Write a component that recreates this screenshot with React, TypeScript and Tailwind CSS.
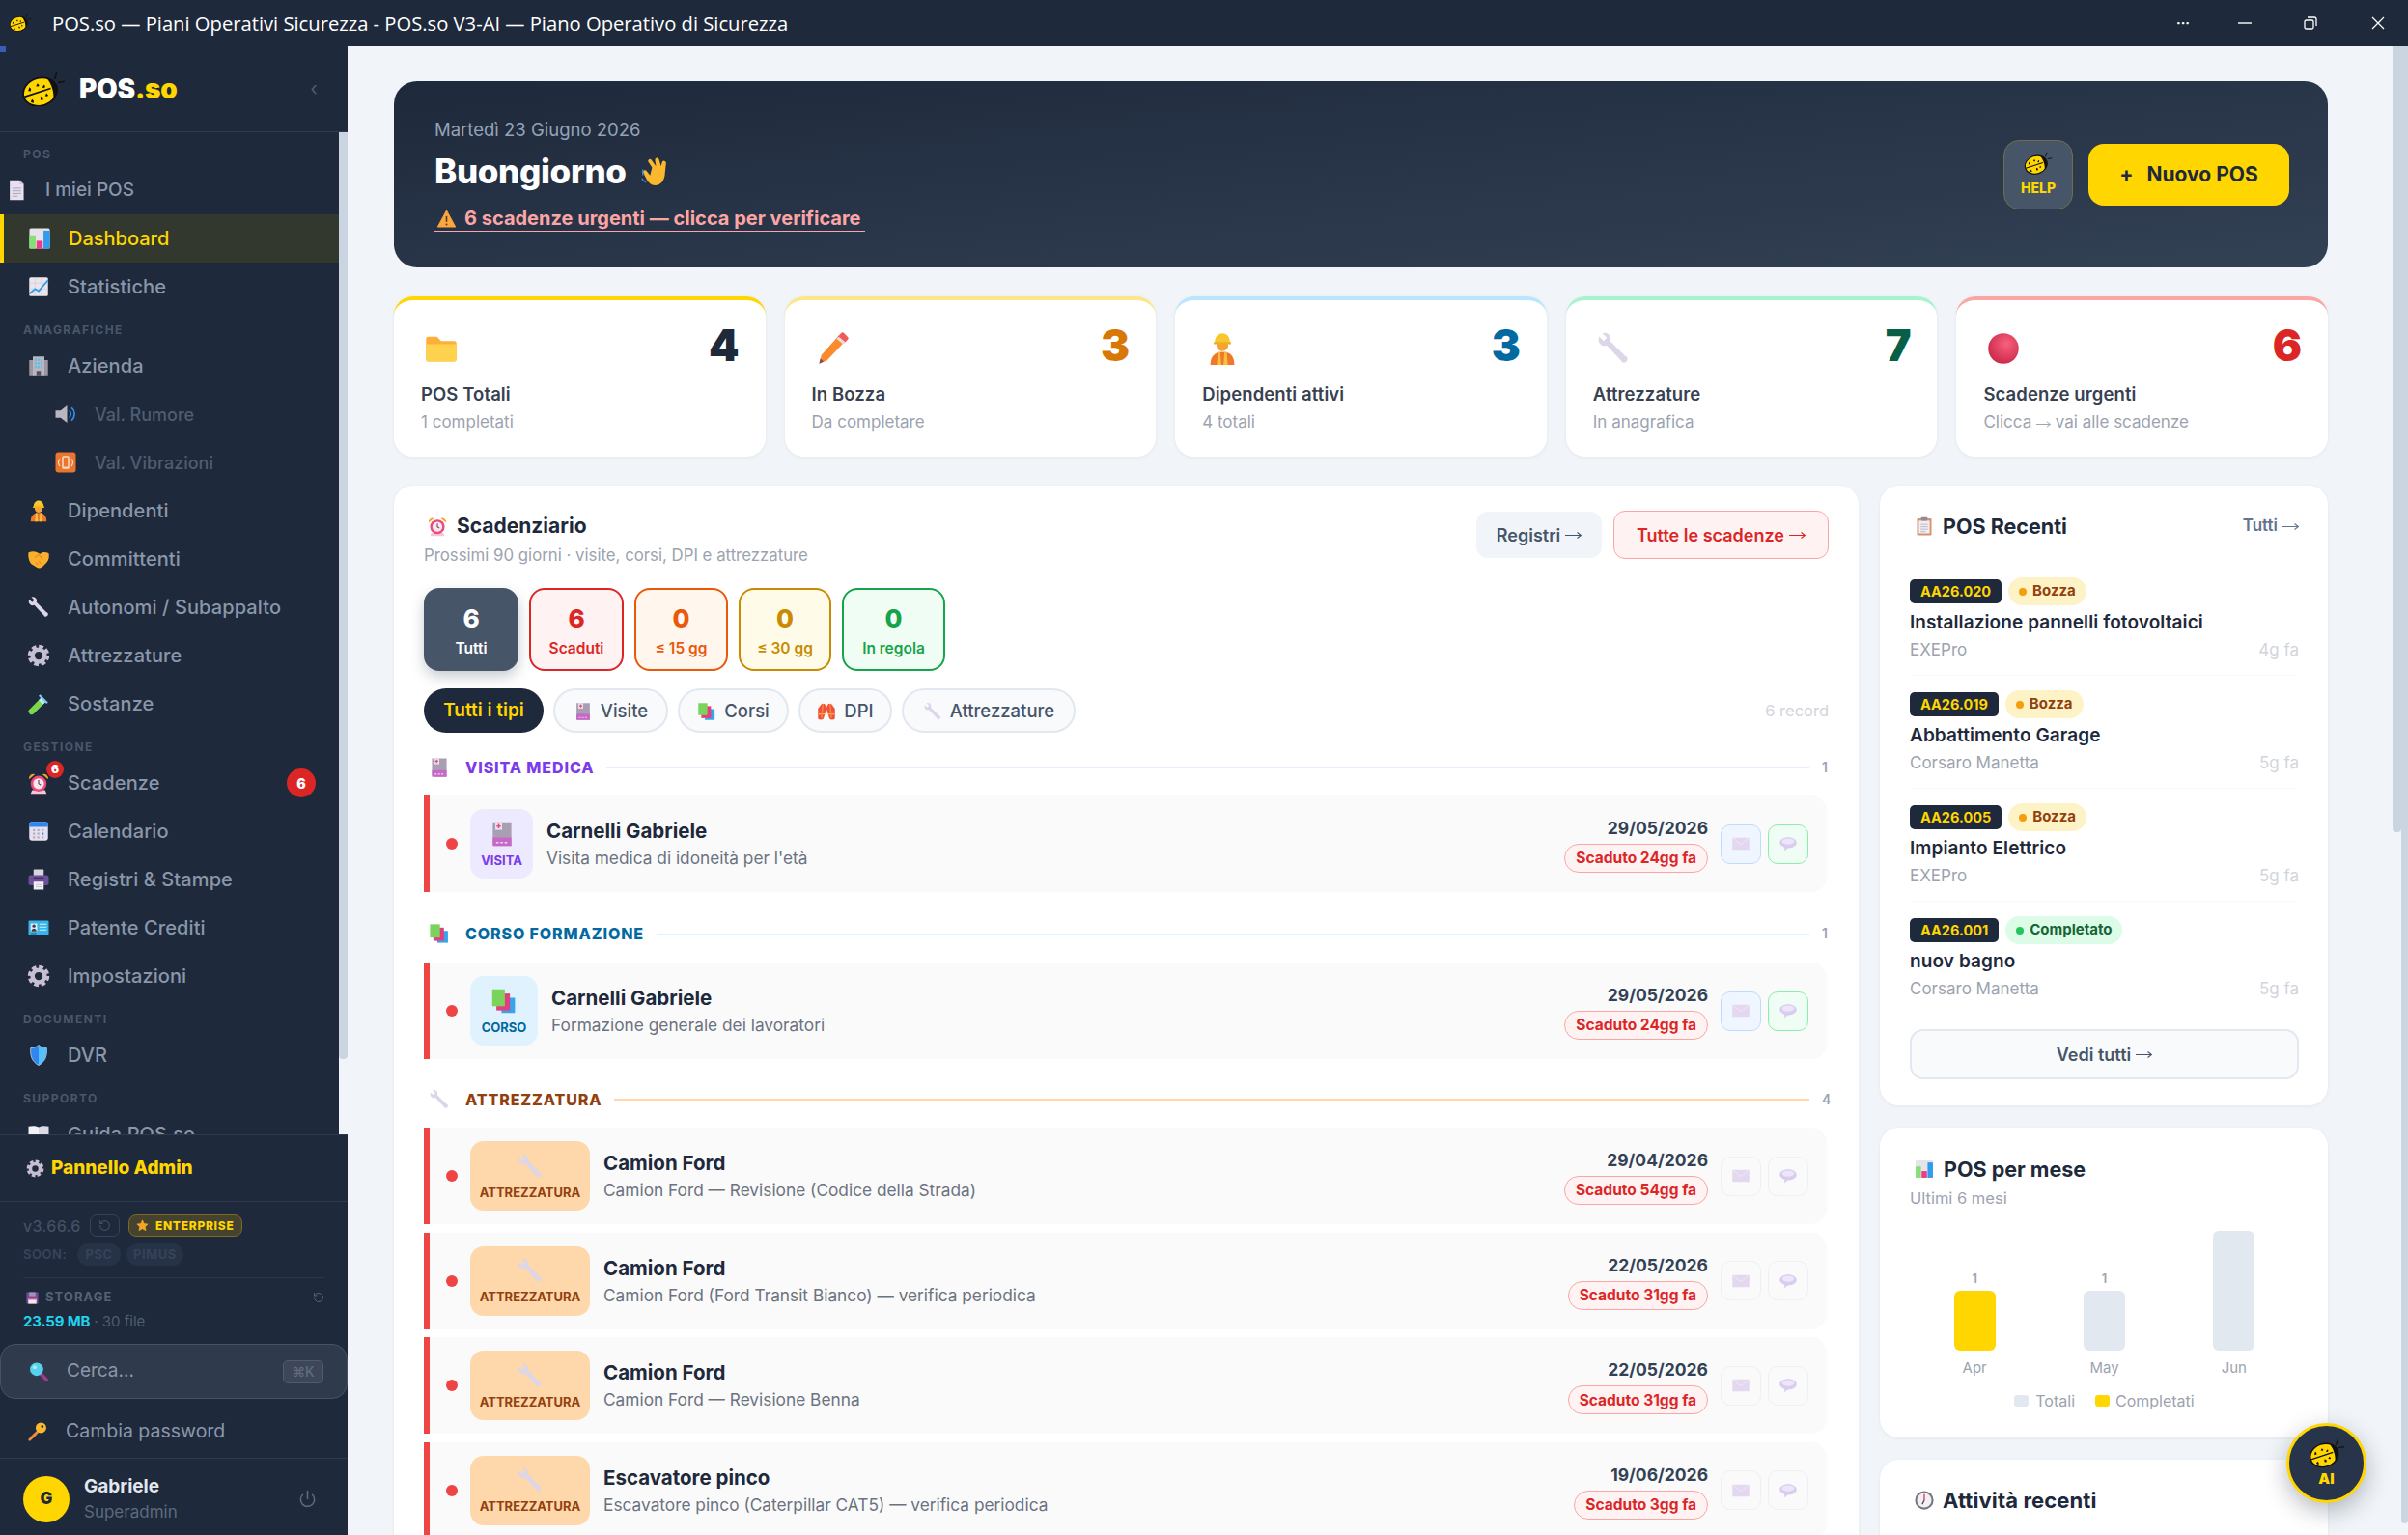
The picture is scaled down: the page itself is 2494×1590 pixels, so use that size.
import React from 'react';
import { Power, RotateCcw } from 'lucide-react';

const paths: Record<string, React.ReactNode> = {
  doc: (<><path d="M6 1h15l6 6v24H6z" fill="#e7e0f0" /><path d="M21 1l6 6h-6z" fill="#c9c0da" /><path d="M10 13h13M10 17h13M10 21h13M10 25h8" stroke="#a9a2b8" strokeWidth="1.4" /></>),
  bars: (<><rect x="3" y="3" width="26" height="26" rx="2" fill="#e6e3ea" /><rect x="3" y="12" width="8" height="17" fill="#86e07a" /><rect x="12" y="19" width="8" height="10" fill="#ee3b85" /><rect x="21" y="6" width="8" height="23" fill="#2f9cf0" /></>),
  line: (<><rect x="3" y="3" width="26" height="26" rx="2" fill="#e9e6ec" /><path d="M3 11h26M3 19h26M11 3v26M20 3v26" stroke="#d3cfd9" strokeWidth="1" /><path d="M3 26l8-7 5 3 13-15" fill="none" stroke="#2f9cf0" strokeWidth="2.4" /></>),
  building: (<><rect x="3" y="8" width="6" height="21" fill="#9a97a3" /><rect x="23" y="8" width="6" height="21" fill="#9a97a3" /><rect x="8" y="3" width="16" height="26" fill="#b9b6c2" /><path d="M11 6h2v3h-2zM15 6h2v3h-2zM19 6h2v3h-2zM11 11h2v3h-2zM15 11h2v3h-2zM19 11h2v3h-2zM11 16h2v3h-2zM15 16h2v3h-2zM19 16h2v3h-2z" fill="#3cc4f2" /><rect x="13" y="23" width="6" height="6" fill="#56505f" /></>),
  speaker: (<><path d="M2 11h7l9-7v24l-9-7H2z" fill="#b9b6c2" /><path d="M21 11a7 7 0 0 1 0 10M24 7a12 12 0 0 1 0 18" fill="none" stroke="#2f8df0" strokeWidth="2.2" /></>),
  vibrate: (<><rect x="2" y="2" width="28" height="28" rx="4" fill="#e9752e" /><rect x="11" y="7" width="10" height="18" rx="2" fill="#f7dcc6" /><rect x="13" y="9" width="6" height="13" fill="#e9752e" /><path d="M8 11a8 8 0 0 0 0 10M24 11a8 8 0 0 1 0 10" fill="none" stroke="#f7dcc6" strokeWidth="1.6" /></>),
  worker: (<><path d="M5 31c0-8 4-12 11-12s11 4 11 12z" fill="#f0782c" /><path d="M12 19h2l1 12h-4zM18 19h2l1 12h-4z" fill="#f8c13c" /><circle cx="16" cy="13" r="5.500" fill="#f7a13a" /><path d="M9 11c0-6 3-9 7-9s7 3 7 9z" fill="#fbc52d" /><rect x="8" y="10" width="16" height="2" fill="#eeb020" /></>),
  hands: (<><path d="M2 7c5-2 8-2 12 0l4 2 3-2c3-1 6 0 9 1 1 5 0 10-3 13l-6 6c-3 2-5 2-7 1l-8-5C3 20 1 13 2 7z" fill="#fbb02d" /><path d="M11 14l5-4 6 6M15 24l-3-3M19 22l-3-3" fill="none" stroke="#e88a18" strokeWidth="1.5" /></>),
  wrench: (<path d="M6 2c3-1 6 0 7 3 1 2 0 3 0 4l14 14c2 0 3 3 1 5s-4 1-5-1L10 13c-2 1-4 1-6-1-2-2-2-5-1-7l4 4 3-3z" fill="#dcd6e8" />),
  gear: (<><circle cx="16" cy="16" r="12.5" fill="none" stroke="#c6bfd2" strokeWidth="5" strokeDasharray="6.2 3.6" /><circle cx="16" cy="16" r="8.5" fill="none" stroke="#c6bfd2" strokeWidth="6" /></>),
  tube: (<><path d="M3 24L19 8l6 6L9 30c-2 2-5 1-6-1s-2-3 0-5z" fill="#7ad84a" /><path d="M16 11l4-4 6 6-4 4z" fill="#bfeaf8" /><path d="M17 4l11 11" stroke="#7ec8ee" strokeWidth="3" /></>),
  alarm: (<><path d="M3 11a6 6 0 0 1 8-7zM29 11a6 6 0 0 0-8-7z" fill="#f5a524" /><path d="M7 26l-2 5h22l-2-5z" fill="#f4c6d8" /><circle cx="16" cy="17" r="11" fill="#ea4a7c" /><circle cx="16" cy="17" r="7.5" fill="#f8e8ee" /><path d="M16 12v5l3 2" fill="none" stroke="#6b4a5e" strokeWidth="1.6" /></>),
  calendar: (<><rect x="3" y="3" width="26" height="26" rx="4" fill="#e6e1ee" /><path d="M3 10V7a4 4 0 0 1 4-4h18a4 4 0 0 1 4 4v3z" fill="#2f86ee" /><path d="M8 13h3v3H8zM14 13h3v3h-3zM20 13h3v3h-3zM8 18h3v3H8zM14 18h3v3h-3zM8 23h3v3H8zM14 23h3v3h-3zM20 23h3v3h-3z" fill="#b3adc0" /><rect x="20" y="18" width="3" height="3" fill="#2f8df0" /></>),
  printer: (<><rect x="9" y="2" width="14" height="10" rx="1" fill="#d9d4e2" /><rect x="2" y="10" width="28" height="14" rx="3" fill="#6c4f96" /><rect x="9" y="13" width="14" height="3" fill="#3f2f5c" /><rect x="9" y="19" width="14" height="11" fill="#f2f0f5" /><path d="M12 23h8M12 26h8" stroke="#b8b3c2" /></>),
  card: (<><rect x="2" y="6" width="28" height="20" rx="1.5" fill="#37b4ea" /><rect x="5" y="10" width="9" height="11" fill="#d9f0fa" /><circle cx="9.5" cy="13.5" r="2.2" fill="#4a3a3a" /><path d="M6 21c0-3 2-4 3.5-4s3.500 1 3.500 4z" fill="#4a3a3a" /><path d="M17 11h10M17 15h10M17 19h10" stroke="#d9f0fa" strokeWidth="1.5" /><path d="M5 24h8" stroke="#114a6c" strokeWidth="1" /></>),
  shield: (<><path d="M16 2c3 3 7 4 11 4 1 11-2 19-11 24C7 25 4 17 5 6c4 0 8-1 11-4z" fill="#2f86ee" stroke="#b9c7da" strokeWidth="1.2" /><path d="M16 2c3 3 7 4 11 4 1 11-2 19-11 24z" fill="#57c0fa" /></>),
  book: (<><path d="M2 5c5-1 10-1 14 1v24c-4-2-9-2-14-1z" fill="#f2f1f6" /><path d="M30 5c-5-1-10-1-14 1v24c4-2 9-2 14-1z" fill="#dcdae6" /></>),
  star: (<path d="M16 2l4.300 9 9.700 1.300-7 6.800 1.700 9.700-8.700-4.700-8.700 4.700 1.700-9.700-7-6.800 9.700-1.300z" fill="#f5a623" stroke="#f5a623" strokeWidth="1.5" strokeLinejoin="round" />),
  floppy: (<><rect x="3" y="3" width="26" height="26" rx="2" fill="#6c4f96" /><rect x="9" y="3" width="14" height="9" fill="#a18fbd" /><rect x="7" y="16" width="18" height="13" fill="#f2e6f0" /><rect x="7" y="16" width="18" height="4" fill="#ea4a7c" /></>),
  lens: (<><path d="M19 19l9 9" stroke="#a23a8e" strokeWidth="5" strokeLinecap="round" /><circle cx="13" cy="12" r="10" fill="#57d2ee" /><circle cx="10" cy="9" r="3" fill="#a8ecf8" /></>),
  key: (<><path d="M4 28l13-13" stroke="#f08a3c" strokeWidth="4" strokeLinecap="round" /><path d="M7 22l3 3M10 19l3 3" stroke="#f08a3c" strokeWidth="2.5" /><circle cx="21" cy="10" r="8" fill="#fbb92d" /><circle cx="23" cy="8" r="2" fill="#1e293b" /></>),
  wave: (<><path d="M12 12L8 6a2 2 0 0 1 3-2l5 7-1-6a2 2 0 0 1 4-1l2 7 1-4a2 2 0 0 1 4 1l-1 9c0 8-4 13-10 13-4 0-7-3-9-7l-3-6a2 2 0 0 1 3-2l4 5z" fill="#fbb82e" /><path d="M3 20c-1-2-1-4 0-6M6 27c-2-1-4-2-4-4" fill="none" stroke="#2f86ee" strokeWidth="1.4" /></>),
  warn: (<><path d="M16 3l14 26H2z" fill="#f9a73e" stroke="#f9a73e" strokeWidth="1.5" strokeLinejoin="round" /><path d="M16 12v9" stroke="#5a3a1e" strokeWidth="2.4" /><circle cx="16" cy="25" r="1.500" fill="#5a3a1e" /></>),
  folder: (<><path d="M2 7a2 2 0 0 1 2-2h8l4 4h12a2 2 0 0 1 2 2v15a2 2 0 0 1-2 2H4a2 2 0 0 1-2-2z" fill="#fbb03b" /><path d="M2 12h28v14a2 2 0 0 1-2 2H4a2 2 0 0 1-2-2z" fill="#ffd24d" /></>),
  pencil: (<><path d="M6 22L22 4l6 5L11 27l-7 3z" fill="#f98a2e" /><path d="M21 5l3-3a2 2 0 0 1 3 0l3 3a2 2 0 0 1 0 3l-3 3z" fill="#f25a5a" /><path d="M20 7l2-2 6 5-2 2z" fill="#eedada" /><path d="M4 30l1-5 3 3z" fill="#7a4a68" /></>),
  redball: (<><defs><radialGradient id="rb" cx="0.6" cy="0.35" r="0.8"><stop offset="0" stopColor="#f8607e" /><stop offset="1" stopColor="#c4203f" /></radialGradient></defs><circle cx="16" cy="16" r="14" fill="url(#rb)" /></>),
  medbook: (<><path d="M5 2h22v28H8a3 3 0 0 1-3-3z" fill="#a99fb2" /><rect x="8" y="2" width="8" height="9" fill="#e9e2ee" /><path d="M12 4v5M9.500 6.500h5" stroke="#ea4a7c" strokeWidth="1.800" /><rect x="5" y="20" width="22" height="10" fill="#c668c8" /><path d="M9 26h3M14 26h3M19 26h3" stroke="#f4d7f2" strokeWidth="1.500" /></>),
  books: (<><rect x="13" y="12" width="16" height="18" fill="#3aa4ea" /><rect x="7" y="7" width="16" height="20" fill="#e0417e" /><rect x="2" y="2" width="15" height="20" fill="#7ad45c" /></>),
  vest: (<><path d="M8 3h5l3 6 3-6h5l6 8v17c-3 2-6 2-9 0l-5-16-5 16c-3 2-6 2-9 0V11z" fill="#f0503c" /><path d="M3 20h10M19 20h10" stroke="#f8c13c" strokeWidth="2" /><path d="M10 3l-2 24M22 3l2 24" stroke="#f8843c" strokeWidth="2.500" /></>),
  mail: (<><rect x="2" y="6" width="28" height="20" fill="#e3d8ef" /><path d="M2 6l14 11L30 6" fill="none" stroke="#f0e9f6" strokeWidth="1.500" /></>),
  bubble: (<><path d="M16 5c8 0 14 4 14 9s-6 9-14 9l-1 0-5 5 0-6C5 20 2 17 2 14c0-5 6-9 14-9z" fill="#d9ccf0" /><ellipse cx="16" cy="12" rx="10" ry="5" fill="#ede6f8" /></>),
  clipboard: (<><rect x="4" y="3" width="24" height="28" rx="2" fill="#d8916a" /><rect x="7" y="7" width="18" height="21" fill="#f0eef4" /><path d="M10 13h12M10 17h12M10 21h12M10 25h8" stroke="#b0abbd" strokeWidth="1.300" /><rect x="11" y="1" width="10" height="6" rx="1" fill="#8e8a98" /></>),
  clock: (<><circle cx="16" cy="16" r="14" fill="#7a7680" /><circle cx="16" cy="16" r="11" fill="#f2f0f4" /><path d="M16 16V7" stroke="#ea3a6c" strokeWidth="2" /><path d="M16 16l-3 6" stroke="#514c58" strokeWidth="2" /></>),
};

function Emoji({ name, size = 24, className = '' }: { name: string; size?: number; className?: string }) {
  return (
    <svg width={size} height={size} viewBox="0 0 32 32" className={`shrink-0 ${className}`}>
      {paths[name]}
    </svg>
  );
}

function Ladybug({ w = 40, className = '' }: { w?: number; className?: string }) {
  return (
    <svg width={w} height={w * 0.8} viewBox="0 0 40 32" className={`shrink-0 ${className}`}>
      <path d="M30 7l2-6M33 10l6-1" stroke="#111" strokeWidth="1.300" />
      <g transform="rotate(-18 18 18)">
        <ellipse cx="17" cy="18" rx="15.500" ry="12.500" fill="#ffd600" stroke="#111" strokeWidth="1.500" />
        <path d="M26 7.500a15 12.500 0 0 1 0 21c3-6 3-15 0-21z" fill="#111" />
        <path d="M2 18h25" stroke="#111" strokeWidth="1.400" />
        <path d="M9 11l1 2-1 2-2-1zM17 10l1 2-1 1-2-1zM22 13l1 1-1 2-2-1zM8 22l1 2-1 2-2-2zM16 22l2 2-1 2-2-1zM22 21l1 2-1 1-2-1z" fill="#111" />
      </g>
    </svg>
  );
}

function Arrow({ w = 17 }: { w?: number }) {
  return (
    <svg width={w} height="9" viewBox="0 0 17 9" fill="none" stroke="currentColor" strokeWidth="1.100" className="inline-block shrink-0 align-[-1px]">
      <path d="M0 4.500h16M12.500 1.500l4 3-4 3" />
    </svg>
  );
}

type NavItem = { label?: string; section?: string; icon?: string; kind?: 'top' | 'sub' | 'active' };

const nav: NavItem[] = [
  { section: 'POS' },
  { label: 'I miei POS', icon: 'doc', kind: 'top' },
  { label: 'Dashboard', icon: 'bars', kind: 'active' },
  { label: 'Statistiche', icon: 'line' },
  { section: 'ANAGRAFICHE' },
  { label: 'Azienda', icon: 'building' },
  { label: 'Val. Rumore', icon: 'speaker', kind: 'sub' },
  { label: 'Val. Vibrazioni', icon: 'vibrate', kind: 'sub' },
  { label: 'Dipendenti', icon: 'worker' },
  { label: 'Committenti', icon: 'hands' },
  { label: 'Autonomi / Subappalto', icon: 'wrench' },
  { label: 'Attrezzature', icon: 'gear' },
  { label: 'Sostanze', icon: 'tube' },
  { section: 'GESTIONE' },
  { label: 'Scadenze', icon: 'alarm' },
  { label: 'Calendario', icon: 'calendar' },
  { label: 'Registri & Stampe', icon: 'printer' },
  { label: 'Patente Crediti', icon: 'card' },
  { label: 'Impostazioni', icon: 'gear' },
  { section: 'DOCUMENTI' },
  { label: 'DVR', icon: 'shield' },
  { section: 'SUPPORTO' },
  { label: 'Guida POS.so', icon: 'book' },
];

function SideRow({ item }: { item: NavItem }) {
  if (item.section) {
    return (
      <div className="flex h-8 shrink-0 items-end pb-[3px] pl-6 text-[12px] font-bold tracking-[0.12em] text-[#4a576b]">
        {item.section}
      </div>
    );
  }
  if (item.kind === 'top') {
    return (
      <div className="flex h-[50px] shrink-0 items-center gap-[19px] pl-[6px] text-[19px] font-medium text-[#8a97aa]">
        <Emoji name={item.icon!} size={22} />
        {item.label}
      </div>
    );
  }
  if (item.kind === 'sub') {
    return (
      <div className="flex h-[50px] shrink-0 items-center gap-[18px] pl-[56px] text-[18px] font-medium text-[#4f5d72]">
        <Emoji name={item.icon!} size={24} />
        {item.label}
      </div>
    );
  }
  if (item.kind === 'active') {
    return (
      <div className="flex h-[50px] shrink-0 items-center gap-[17px] border-l-4 border-[#ffd600] bg-[#33382f] pl-6 text-[20px] font-medium text-[#ffd600]">
        <Emoji name={item.icon!} size={26} />
        {item.label}
      </div>
    );
  }
  return (
    <div className="relative flex h-[50px] shrink-0 items-center gap-[18px] pl-7 text-[20px] font-medium tracking-[0.005em] text-[#8a97aa]">
      <Emoji name={item.icon!} size={24} />
      {item.label}
      {item.label === 'Scadenze' && (
        <>
          <span className="absolute left-[48px] top-[2px] flex h-[18px] w-[18px] items-center justify-center rounded-full bg-[#dc2626] text-[12px] font-black text-white">6</span>
          <span className="absolute left-[297px] top-[10px] flex h-[30px] w-[30px] items-center justify-center rounded-full bg-[#dc2626] text-[14px] font-black text-white">6</span>
        </>
      )}
    </div>
  );
}

function Sidebar() {
  return (
    <aside className="flex w-[360px] shrink-0 flex-col">
      <div className="flex h-[89px] shrink-0 items-center border-b border-[#2e3a4d] bg-[#1e293b] pl-[22px] pr-[31px]">
        <Ladybug w={46} />
        <span className="ml-[14px] text-[28px] font-black tracking-[-0.01em] text-white">POS<span className="text-[#ffd600]">.so</span></span>
        <span className="ml-auto text-[20px] text-[#4f5d72]">‹</span>
      </div>
      <div className="flex h-[1038px] shrink-0 bg-[#f1f5f9]">
        <nav className="flex w-[351px] shrink-0 flex-col overflow-hidden bg-[#1e293b] pt-[3px]">
          {nav.map((n, i) => <SideRow key={i} item={n} />)}
        </nav>
        <div className="h-[960px] w-[9px] rounded-b-[4px] bg-[#cbd5e1]" />
      </div>
      <div className="flex flex-1 flex-col border-t border-[#2e3a4d] bg-[#1e293b]">
        <div className="flex h-[69px] shrink-0 items-center gap-[7px] border-b border-[#2e3a4d] pl-[27px] text-[19px] font-extrabold text-[#ffd600]">
          <Emoji name="gear" size={19} />
          Pannello Admin
        </div>
        <div className="mx-6 flex h-[23px] mt-[13px] items-center gap-[9px]">
          <span className="text-[16px] font-medium tracking-[0.02em] text-[#435064]">v3.66.6</span>
          <span className="flex h-[23px] w-[31px] items-center justify-center rounded-[7px] border border-[#36435a] text-[#435064]">
            <RotateCcw size={13} />
          </span>
          <span className="flex h-[23px] w-[118px] items-center justify-center gap-[7px] rounded-[8px] border border-[#7a6c1e] bg-[#45432f] text-[12px] font-extrabold tracking-[0.06em] text-[#ffd600]">
            <Emoji name="star" size={13} />
            ENTERPRISE
          </span>
        </div>
        <div className="mx-6 mt-[7px] flex h-[23px] items-center text-[13px] font-bold tracking-[0.04em] text-[#36425a]">
          <span className="w-[56px]">SOON:</span>
          <span className="flex h-[23px] w-[45px] items-center justify-center rounded-full bg-[#263246]">PSC</span>
          <span className="ml-[6px] flex h-[23px] w-[59px] items-center justify-center rounded-full bg-[#263246]">PIMUS</span>
        </div>
        <div className="mx-6 mt-[12px] flex h-[33px] items-end justify-between border-t border-[#2a3649] text-[#566377]">
          <span className="flex h-[24px] items-center gap-[6px] pl-[2px] text-[13px] font-bold tracking-[0.08em]">
            <Emoji name="floppy" size={15} />
            STORAGE
          </span>
          <span className="flex h-[24px] items-center"><RotateCcw size={12} /></span>
        </div>
        <div className="mx-6 mt-[1px] flex h-[24px] items-center text-[15px] text-[#4f5d72]">
          <span className="font-bold tracking-[-0.01em] text-[#22d3ee]">23.59 MB</span>
          <span className="ml-[4px]">· 30 file</span>
        </div>
        <div className="mt-[11px] flex h-[57px] shrink-0 items-center rounded-[16px] border border-[#465266] bg-[#2f3a4c] pl-[28px] pr-[24px] text-[19px] text-[#8a97aa]">
          <Emoji name="lens" size={22} />
          <span className="ml-[18px]">Cerca...</span>
          <span className="ml-auto flex h-[24px] w-[42px] items-center justify-center rounded-[5px] border border-[#4f5b6e] bg-[#3d4759] text-[14px] font-medium text-[#5f6c82]">⌘K</span>
        </div>
        <div className="flex h-[61px] shrink-0 items-center gap-[18px] pl-[28px] pt-[6px] text-[19.500px] text-[#8a97aa]">
          <Emoji name="key" size={22} />
          Cambia password
        </div>
        <div className="flex flex-1 items-center border-t border-[#2e3a4d] pl-6 pr-[32px] pt-[4px]">
          <div className="flex h-12 w-12 shrink-0 items-center justify-center rounded-full bg-[#ffd600] text-[17px] font-black text-[#1e293b]">G</div>
          <div className="ml-[15px] flex flex-col">
            <span className="text-[19px] font-bold leading-[26px] text-[#e2e8f0]">Gabriele</span>
            <span className="text-[17px] leading-[26px] text-[#5b6a7f]">Superadmin</span>
          </div>
          <Power size={19} className="ml-auto text-[#5b6a7f]" />
        </div>
      </div>
    </aside>
  );
}

function StatCard({ icon, value, title, sub, top, color }: { icon: string; value: string; title: string; sub: React.ReactNode; top: string; color: string }) {
  return (
    <div className={`flex h-[166px] flex-col rounded-[20px] border-t-4 bg-white pl-7 pr-[27px] pt-[21px] shadow-[0_1px_4px_rgba(15,23,42,0.06)] ${top}`}>
      <div className="flex h-[50px] items-center justify-between">
        <Emoji name={icon} size={36} className="ml-[3px] mt-[8px]" />
        <span className={`text-[45px] font-black leading-none ${color}`}>{value}</span>
      </div>
      <div className="mt-[13px] h-[26px] text-[18.5px] font-semibold leading-[26px] tracking-[0.005em] text-[#374151]">{title}</div>
      <div className="mt-[3px] h-[26px] text-[17px] leading-[26px] text-[#9ca3af]">{sub}</div>
    </div>
  );
}

function Filter({ num, label, cls, w }: { num: string; label: string; cls: string; w: string }) {
  return (
    <div className={`flex h-[86px] flex-col items-center rounded-[16px] border-2 pt-[15px] ${w} ${cls}`}>
      <span className="text-[26px] font-extrabold leading-[30px]">{num}</span>
      <span className="mt-[3px] text-[15.500px] font-semibold leading-[26px]">{label}</span>
    </div>
  );
}

function Pill({ icon, label, w }: { icon: string; label: string; w: string }) {
  return (
    <div className={`flex h-[46px] items-center justify-center gap-[8px] rounded-full border-2 border-[#e2e8f0] bg-[#f8fafc] pt-[1px] text-[18.500px] font-medium text-[#475569] ${w}`}>
      <Emoji name={icon} size={20} />
      {label}
    </div>
  );
}

function Group({ icon, label, count, text, line }: { icon: string; label: string; count: string; text: string; line: string }) {
  return (
    <div className="mr-[2px] flex h-[30px] items-center pl-[5px]">
      <Emoji name={icon} size={22} />
      <span className={`ml-[16px] text-[16px] font-extrabold tracking-[0.055em] ${text}`}>{label}</span>
      <div className={`ml-[13px] flex-1 ${line}`} />
      <span className="ml-[13px] w-[5px] text-[14px] font-semibold leading-none text-[#9ca3af]">{count}</span>
    </div>
  );
}

function DeadlineRow({ chip, chipBg, chipText, chipW, icon, name, desc, date, late, neutral }: {
  chip: string; chipBg: string; chipText: string; chipW: string; icon: string; name: string; desc: string; date: string; late: string; neutral?: boolean;
}) {
  return (
    <div className="mr-[2px] flex h-[100px] items-center rounded-r-[16px] border-l-[6px] border-[#ef4444] bg-[#fafafa] pr-[19px]">
      <span className="ml-[17px] h-3 w-3 shrink-0 rounded-full bg-[#ef4444]" />
      <div className={`ml-[13px] flex h-[72px] shrink-0 flex-col items-center justify-center rounded-[14px] ${chipW} ${chipBg}`}>
        <Emoji name={icon} size={28} />
        <span className={`mt-[5px] text-[13px] font-bold leading-[16px] ${chipText}`}>{chip}</span>
      </div>
      <div className="ml-[14px] flex flex-col">
        <span className="text-[20.500px] font-bold leading-[30px] text-[#1e293b]">{name}</span>
        <span className="text-[17.300px] leading-[26px] text-[#6b7280]">{desc}</span>
      </div>
      <div className="ml-auto flex flex-col items-end">
        <span className="text-[17.500px] font-bold leading-[28px] text-[#334155]">{date}</span>
        <span className="mt-[2px] flex h-[30px] items-center rounded-full border border-[#fca5a5] bg-[#fef2f2] px-[11px] text-[15.500px] font-bold text-[#dc2626]">{late}</span>
      </div>
      <div className={`ml-[13px] flex h-[41px] w-[42px] shrink-0 items-center justify-center rounded-[10px] border ${neutral ? 'border-[#eef0f4] bg-[#fafafa]' : 'border-[#bfdbfe] bg-[#eff6ff]'}`}>
        <Emoji name="mail" size={20} />
      </div>
      <div className={`ml-[7px] flex h-[41px] w-[42px] shrink-0 items-center justify-center rounded-[10px] border ${neutral ? 'border-[#eef0f4] bg-[#fafafa]' : 'border-[#86efac] bg-[#f0fdf4]'}`}>
        <Emoji name="bubble" size={20} />
      </div>
    </div>
  );
}

function Scadenziario() {
  const equip = { chip: 'ATTREZZATURA', chipBg: 'bg-[#fed7aa]', chipText: 'text-[#92400e]', chipW: 'w-[124px]', icon: 'wrench', neutral: true };
  return (
    <section className="flex h-[1200px] flex-1 flex-col rounded-[20px] bg-white px-[31px] pt-[26px] shadow-[0_1px_4px_rgba(15,23,42,0.06)]">
      <div className="flex h-[60px] items-start justify-between">
        <div className="flex flex-col">
          <div className="flex h-[32px] items-center gap-[9px] pl-[3px] text-[21px] font-bold text-[#1e293b]">
            <Emoji name="alarm" size={22} />
            Scadenziario
          </div>
          <div className="h-[28px] text-[16.800px] leading-[28px] text-[#9ca3af]">Prossimi 90 giorni · visite, corsi, DPI e attrezzature</div>
        </div>
        <div className="flex items-center gap-[12px]">
          <span className="flex h-[48px] w-[130px] items-center justify-center gap-[5px] rounded-[12px] bg-[#f1f5f9] text-[18px] font-semibold text-[#475569]">Registri <Arrow /></span>
          <span className="flex h-[50px] w-[223px] items-center justify-center gap-[5px] rounded-[12px] border border-[#fca5a5] bg-[#fef2f2] text-[18px] font-semibold text-[#dc2626]">Tutte le scadenze <Arrow /></span>
        </div>
      </div>
      <div className="mt-5 flex gap-[11px]">
        <Filter num="6" label="Tutti" w="w-[98px]" cls="border-[#475569] bg-[#475569] text-white shadow-[0_6px_14px_rgba(71,85,105,0.3)]" />
        <Filter num="6" label="Scaduti" w="w-[98px]" cls="border-[#dc2626] bg-[#fef2f2] text-[#dc2626]" />
        <Filter num="0" label="≤ 15 gg" w="w-[97px]" cls="border-[#ea580c] bg-[#fff7ed] text-[#ea580c]" />
        <Filter num="0" label="≤ 30 gg" w="w-[96px]" cls="border-[#ca8a04] bg-[#fefce8] text-[#ca8a04]" />
        <Filter num="0" label="In regola" w="w-[107px]" cls="border-[#16a34a] bg-[#f0fdf4] text-[#16a34a]" />
      </div>
      <div className="mt-[18px] flex items-center gap-[10px]">
        <div className="flex h-[46px] w-[124px] items-center justify-center rounded-full bg-[#1e293b] pt-[1px] text-[19px] font-semibold text-[#ffd600]">Tutti i tipi</div>
        <Pill icon="medbook" label="Visite" w="w-[119px]" />
        <Pill icon="books" label="Corsi" w="w-[115px]" />
        <Pill icon="vest" label="DPI" w="w-[97px]" />
        <Pill icon="wrench" label="Attrezzature" w="w-[180px]" />
        <span className="ml-auto text-[16.500px] text-[#d1d5db]">6 record</span>
      </div>
      <div className="mt-[21px]">
        <Group icon="medbook" label="VISITA MEDICA" count="1" text="text-[#7c3aed]" line="h-[2px] bg-[#ede9fe]" />
      </div>
      <div className="mt-[14px]">
        <DeadlineRow chip="VISITA" chipBg="bg-[#ede9fe]" chipText="text-[#7c3aed]" chipW="w-[65px]" icon="medbook" name="Carnelli Gabriele" desc="Visita medica di idoneità per l'età" date="29/05/2026" late="Scaduto 24gg fa" />
      </div>
      <div className="mt-[28px]">
        <Group icon="books" label="CORSO FORMAZIONE" count="1" text="text-[#0369a1]" line="h-px bg-[#e0f2fe]" />
      </div>
      <div className="mt-[15px]">
        <DeadlineRow chip="CORSO" chipBg="bg-[#e0f2fe]" chipText="text-[#0369a1]" chipW="w-[70px]" icon="books" name="Carnelli Gabriele" desc="Formazione generale dei lavoratori" date="29/05/2026" late="Scaduto 24gg fa" />
      </div>
      <div className="mt-[27px]">
        <Group icon="wrench" label="ATTREZZATURA" count="4" text="text-[#92400e]" line="h-[2px] bg-[#fed7aa]" />
      </div>
      <div className="mt-[14px] flex flex-col gap-[8.670px]">
        <DeadlineRow {...equip} name="Camion Ford" desc="Camion Ford — Revisione (Codice della Strada)" date="29/04/2026" late="Scaduto 54gg fa" />
        <DeadlineRow {...equip} name="Camion Ford" desc="Camion Ford (Ford Transit Bianco) — verifica periodica" date="22/05/2026" late="Scaduto 31gg fa" />
        <DeadlineRow {...equip} name="Camion Ford" desc="Camion Ford — Revisione Benna" date="22/05/2026" late="Scaduto 31gg fa" />
        <DeadlineRow {...equip} name="Escavatore pinco" desc="Escavatore pinco (Caterpillar CAT5) — verifica periodica" date="19/06/2026" late="Scaduto 3gg fa" />
      </div>
    </section>
  );
}

const recent = [
  { code: 'AA26.020', state: 'Bozza', title: 'Installazione pannelli fotovoltaici', who: 'EXEPro', age: '4g fa' },
  { code: 'AA26.019', state: 'Bozza', title: 'Abbattimento Garage', who: 'Corsaro Manetta', age: '5g fa' },
  { code: 'AA26.005', state: 'Bozza', title: 'Impianto Elettrico', who: 'EXEPro', age: '5g fa' },
  { code: 'AA26.001', state: 'Completato', title: 'nuov bagno', who: 'Corsaro Manetta', age: '5g fa' },
];

function RecentItem({ r, last }: { r: (typeof recent)[number]; last: boolean }) {
  const done = r.state === 'Completato';
  return (
    <div className={`mb-[15px] h-[102px] ${last ? '' : 'border-b border-[#f8fafc]'}`}>
      <div className="flex h-[29px] items-center gap-[7px]">
        <span className="flex h-[25px] items-center rounded-[5px] bg-[#1e293b] px-[11px] text-[14.500px] font-bold text-[#ffd600]">{r.code}</span>
        <span className={`flex h-[29px] items-center gap-[6px] rounded-full px-[11px] text-[15px] font-bold ${done ? 'bg-[#dcfce7] text-[#166534]' : 'bg-[#fef3c7] text-[#92400e]'}`}>
          <span className={`h-2 w-2 rounded-full ${done ? 'bg-[#22c55e]' : 'bg-[#f59e0b]'}`} />
          {r.state}
        </span>
      </div>
      <div className="mt-[3px] h-[30px] text-[19px] font-semibold leading-[30px] tracking-[0.005em] text-[#1e293b]">{r.title}</div>
      <div className="flex h-[28px] items-center justify-between text-[17px]">
        <span className="text-[#9ca3af]">{r.who}</span>
        <span className="text-[#d1d5db]">{r.age}</span>
      </div>
    </div>
  );
}

const months = [
  { m: 'Apr', label: '1', bar: 'h-[62px] bg-[#ffd600]' },
  { m: 'May', label: '1', bar: 'h-[62px] bg-[#e2e8f0]' },
  { m: 'Jun', label: '', bar: 'h-[124px] bg-[#e2e8f0]' },
];

function RightColumn() {
  return (
    <div className="flex w-[464px] shrink-0 flex-col gap-[23px]">
      <section className="h-[642px] rounded-[20px] bg-white pl-[31px] pr-[30px] pt-6 shadow-[0_1px_4px_rgba(15,23,42,0.06)]">
        <div className="flex h-9 items-center justify-between">
          <span className="flex items-center gap-[9px] pl-[5px] text-[21.500px] font-bold text-[#1e293b]">
            <Emoji name="clipboard" size={20} />
            POS Recenti
          </span>
          <span className="flex items-center gap-[5px] text-[17px] font-semibold text-[#64748b]">Tutti <Arrow /></span>
        </div>
        <div className="mt-[35px]">
          {recent.map((r, i) => <RecentItem key={r.code} r={r} last={i === 3} />)}
        </div>
        <div className="flex h-[52px] items-center justify-center gap-[5px] rounded-[14px] border-2 border-[#e2e8f0] bg-[#f8fafc] text-[18px] font-semibold text-[#475569]">Vedi tutti <Arrow /></div>
      </section>
      <section className="h-[321px] rounded-[20px] bg-white pl-[31px] pr-[30px] pt-7 shadow-[0_1px_4px_rgba(15,23,42,0.06)]">
        <div className="flex h-[30px] items-center gap-[9px] pl-[4px] text-[21.500px] font-bold text-[#1e293b]">
          <Emoji name="bars" size={22} />
          POS per mese
        </div>
        <div className="h-[30px] text-[16.500px] leading-[30px] text-[#9ca3af]">Ultimi 6 mesi</div>
        <div className="grid h-[143px] grid-cols-3 items-end">
          {months.map((b) => (
            <div key={b.m} className="flex flex-col items-center">
              {b.label && <span className="mb-[3px] h-5 text-[13px] font-semibold leading-5 text-[#9ca3af]">{b.label}</span>}
              <div className={`w-[43px] rounded-[6px] ${b.bar}`} />
            </div>
          ))}
        </div>
        <div className="grid h-9 grid-cols-3 items-center text-center text-[15px] text-[#9ca3af]">
          {months.map((b) => <span key={b.m}>{b.m}</span>)}
        </div>
        <div className="mt-1 flex h-6 items-center justify-center text-[16px] text-[#9ca3af]">
          <span className="h-3 w-[15px] rounded-[3px] bg-[#e2e8f0]" />
          <span className="ml-[7px]">Totali</span>
          <span className="ml-[21px] h-3 w-[15px] rounded-[3px] bg-[#ffd600]" />
          <span className="ml-[6px]">Completati</span>
        </div>
      </section>
      <section className="h-[200px] rounded-[20px] bg-white px-[31px] pt-[27px] shadow-[0_1px_4px_rgba(15,23,42,0.06)]">
        <div className="flex h-[30px] items-center gap-[8px] pl-[4px] text-[22px] font-bold tracking-[0.005em] text-[#1e293b]">
          <Emoji name="clock" size={22} />
          Attività recenti
        </div>
      </section>
    </div>
  );
}

function Main() {
  return (
    <main className="relative flex-1 overflow-hidden bg-[#f1f5f9] pl-12 pr-[83px] pt-9">
      <div className="flex h-[193px] items-center justify-between rounded-[24px] bg-linear-to-br from-[#1e293b] to-[#334155] pl-[42px] pr-[40px]">
        <div className="flex h-full flex-col pt-[37px]">
          <div className="h-[26px] text-[18.500px] leading-[26px] text-[#94a3b8]">Martedì 23 Giugno 2026</div>
          <div className="mt-[8px] flex h-[44px] items-center gap-[14px] text-[35px] font-extrabold tracking-[-0.01em] text-white">
            Buongiorno
            <Emoji name="wave" size={33} />
          </div>
          <div className="mt-[14px] flex h-[27px] w-[446px] items-center gap-[8px] border-b-[1.5px] border-[#fca5a5] pl-[2px] text-[20px] font-bold text-[#fca5a5]">
            <Emoji name="warn" size={21} />
            6 scadenze urgenti — clicca per verificare
          </div>
        </div>
        <div className="flex items-center gap-[16px]">
          <div className="flex h-[72px] w-[72px] flex-col items-center justify-center rounded-[16px] border border-[#6f6e48] bg-[#475569]">
            <Ladybug w={30} />
            <span className="mt-[5px] text-[14px] font-extrabold leading-[18px] text-[#ffd600]">HELP</span>
          </div>
          <div className="flex h-16 w-[208px] items-center justify-center gap-[14px] rounded-[16px] bg-[#ffd600] text-[21px] font-bold text-[#1e293b]">
            <span>+</span>
            <span>Nuovo POS</span>
          </div>
        </div>
      </div>
      <div className="mt-[30px] grid grid-cols-5 gap-5">
        <StatCard icon="folder" value="4" title="POS Totali" sub="1 completati" top="border-[#ffd600]" color="text-[#1e293b]" />
        <StatCard icon="pencil" value="3" title="In Bozza" sub="Da completare" top="border-[#fde68a]" color="text-[#d97706]" />
        <StatCard icon="worker" value="3" title="Dipendenti attivi" sub="4 totali" top="border-[#bae6fd]" color="text-[#0369a1]" />
        <StatCard icon="wrench" value="7" title="Attrezzature" sub="In anagrafica" top="border-[#a7f3d0]" color="text-[#065f46]" />
        <StatCard icon="redball" value="6" title="Scadenze urgenti" sub={<>Clicca <Arrow w={15} /> vai alle scadenze</>} top="border-[#fca5a5]" color="text-[#dc2626]" />
      </div>
      <div className="mt-[30px] flex items-start gap-[22px]">
        <Scadenziario />
        <RightColumn />
      </div>
      <div className="absolute right-[7px] top-0 h-[814px] w-[9px] rounded-b-[4px] bg-[#c9d4e1]" />
      <div className="absolute right-0 top-0 h-[1530px] w-[7px] rounded-b-[4px] bg-[#cbd5e1]" />
      <div className="absolute bottom-[33px] right-[43px] flex h-[83px] w-[83px] flex-col items-center justify-center rounded-full border-[3px] border-[#ffd600] bg-[#273449] shadow-[0_8px_24px_rgba(15,23,42,0.3)]">
        <Ladybug w={38} />
        <span className="mt-[2px] text-[15px] font-black leading-[18px] text-[#ffd600]">AI</span>
      </div>
    </main>
  );
}

export default function App() {
  return (
    <div className="flex h-[1590px] w-[2494px] flex-col overflow-hidden bg-[#1e293b] font-['Inter','Liberation_Sans',sans-serif]">
      <header className="relative flex h-12 shrink-0 items-center bg-[#1e293b] pl-[9px] text-white">
        <Ladybug w={24} />
        <span className="ml-[21px] font-['Open_Sans',sans-serif] text-[20.200px]">POS.so — Piani Operativi Sicurezza - POS.so V3-AI — Piano Operativo di Sicurezza</span>
        <div className="ml-auto flex items-center pr-[24px]">
          <span className="text-[14px] font-bold leading-none">···</span>
          <svg width="14" height="14" viewBox="0 0 14 14" className="ml-[50px]"><path d="M0 7h14" stroke="#fff" strokeWidth="1.4" /></svg>
          <svg width="14" height="14" viewBox="0 0 14 14" className="ml-[54px]" fill="none" stroke="#fff" strokeWidth="1.300"><rect x="1" y="4" width="9" height="9" rx="1.500" /><path d="M4 1h7a2 2 0 0 1 2 2v7" /></svg>
          <svg width="14" height="14" viewBox="0 0 14 14" className="ml-[56px]" stroke="#fff" strokeWidth="1.300"><path d="M1 1l12 12M13 1L1 13" /></svg>
        </div>
      </header>
      <div className="absolute left-0 top-[48px] h-[6px] w-[6px] bg-[#3b5bb5]" />
      <div className="flex flex-1 overflow-hidden">
        <Sidebar />
        <Main />
      </div>
    </div>
  );
}
